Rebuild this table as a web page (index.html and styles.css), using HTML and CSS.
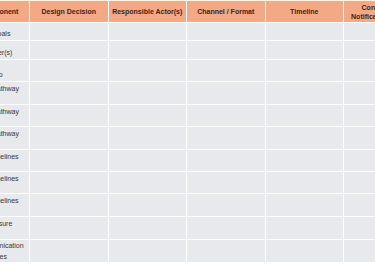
FILE: index.html
```html
<!DOCTYPE html>
<html lang="en">
<head>
<meta charset="utf-8">
<title>Design Decisions Table</title>
<link rel="stylesheet" href="styles.css">
</head>
<body>
<div class="viewport">
<table class="grid">
  <colgroup>
    <col class="c-first">
    <col class="c-std"><col class="c-std"><col class="c-std"><col class="c-std"><col class="c-std">
  </colgroup>
  <thead>
    <tr class="h21">
      <th>Component</th>
      <th>Design Decision</th>
      <th>Responsible Actor(s)</th>
      <th>Channel / Format</th>
      <th>Timeline</th>
      <th>Consent and Notification Details</th>
    </tr>
  </thead>
  <tbody>
    <tr class="h17 rb"><td>Core Goals</td><td></td><td></td><td></td><td></td><td></td></tr>
    <tr class="h18 rb"><td>Reviewer(s)</td><td></td><td></td><td></td><td></td><td></td></tr>
    <tr class="h21 rb"><td>Scenario</td><td></td><td></td><td></td><td></td><td></td></tr>
    <tr class="h22"><td>Main Pathway</td><td></td><td></td><td></td><td></td><td></td></tr>
    <tr class="h21"><td>Main Pathway</td><td></td><td></td><td></td><td></td><td></td></tr>
    <tr class="h22"><td>Main Pathway</td><td></td><td></td><td></td><td></td><td></td></tr>
    <tr class="h21"><td>Key Timelines</td><td></td><td></td><td></td><td></td><td></td></tr>
    <tr class="h21"><td>Key Timelines</td><td></td><td></td><td></td><td></td><td></td></tr>
    <tr class="h22"><td>Key Timelines</td><td></td><td></td><td></td><td></td><td></td></tr>
    <tr class="h22"><td>File Closure</td><td></td><td></td><td></td><td></td><td></td></tr>
    <tr class="h22"><td>Communication Templates</td><td></td><td></td><td></td><td></td><td></td></tr>
  </tbody>
</table>
</div>
</body>
</html>
```

FILE: styles.css
```css
html, body {
  margin: 0;
  padding: 0;
  background: #ffffff;
}

.viewport {
  width: 375px;
  height: 265px;
  overflow: hidden;
}

.grid {
  margin-left: -32px;
  table-layout: fixed;
  width: 454.5px;
  border-collapse: separate;
  border-spacing: 1px;
  font-family: "Liberation Sans", Arial, sans-serif;
  font-size: 7px;
}

.c-first { width: 60px; }
.c-std { width: 77.5px; }

.grid th {
  background: #f4a986;
  color: #3e2416;
  font-weight: 700;
  line-height: 9px;
  text-align: center;
  vertical-align: middle;
  padding: 0 2px;
}

.grid td {
  background: #e7e9ec;
  color: #35373a;
  line-height: 11px;
  vertical-align: top;
  text-align: left;
  padding: 1px 6px 0 6px;
}

.grid .rb td {
  vertical-align: bottom;
  padding-top: 0;
  padding-bottom: 1px;
}

.grid tr:last-child td {
  padding-top: 0;
}

.h17 { height: 17px; }
.h18 { height: 18px; }
.h21 { height: 21px; }
.h22 { height: 22px; }
```
